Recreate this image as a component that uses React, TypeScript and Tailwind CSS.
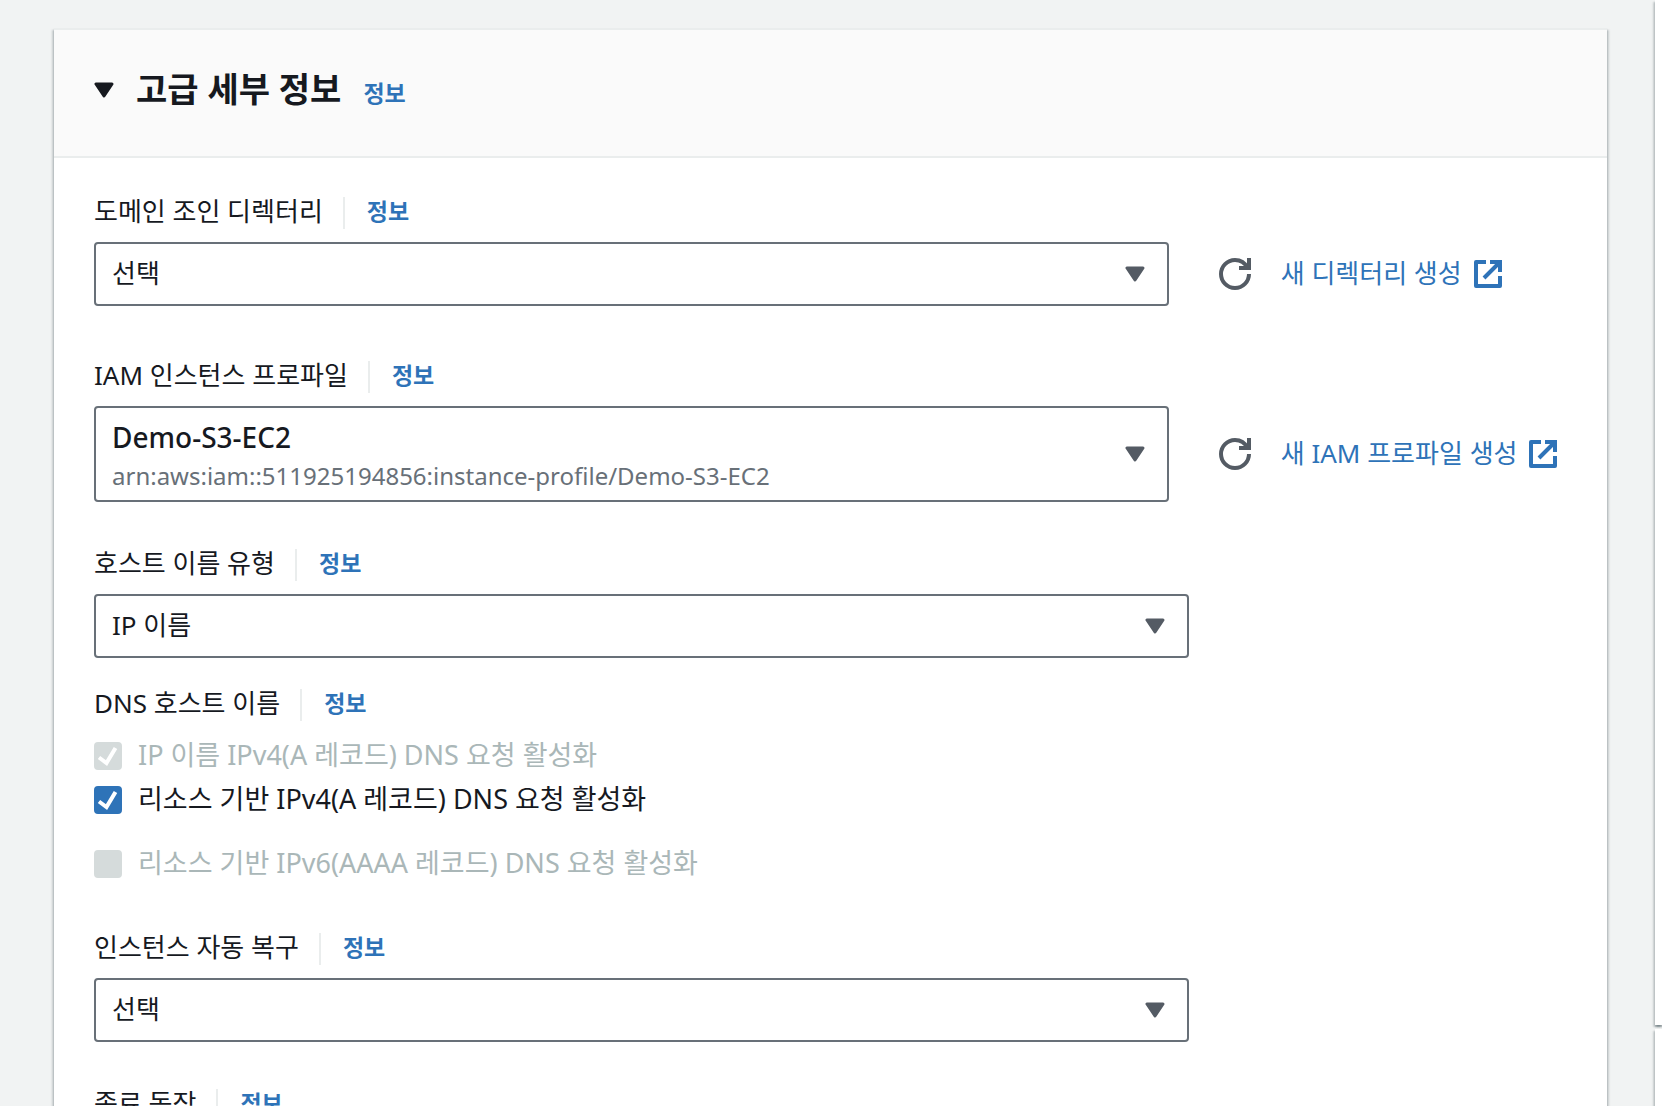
import React, { useState } from "react";

const Caret = ({ className = "" }: { className?: string }) => (
  <svg viewBox="0 0 20 16" className={`w-5 h-4 ${className}`} aria-hidden="true">
    <path
      d="M2 2h16l-8 12z"
      fill="currentColor"
      stroke="currentColor"
      strokeWidth="3"
      strokeLinejoin="round"
    />
  </svg>
);

const RefreshIcon = () => (
  <svg viewBox="0 0 16 16" className="w-8 h-8" fill="none" stroke="currentColor" strokeWidth="2" aria-hidden="true">
    <path d="M15 8a7 7 0 1 1-7-7c2.8 0 5 1.4 6.3 4" />
    <path d="M15 0v5h-5" />
  </svg>
);

const ExternalIcon = () => (
  <svg viewBox="0 0 14 14" className="w-7 h-7" fill="none" stroke="currentColor" strokeWidth="2" aria-hidden="true">
    <path d="M6 1H1v12h12V8" strokeLinejoin="round" />
    <path d="M8 1h5v5M13 1L5 9" />
  </svg>
);

const InfoLink = () => (
  <a href="#info" className="text-[23px] leading-7 font-bold text-[#2e73b8]">
    정보
  </a>
);

const FieldLabel = ({ id, text }: { id: string; text: string }) => (
  <div className="flex items-start h-8 mb-[13px]">
    <label htmlFor={id} className="text-[26px] leading-7">
      {text}
    </label>
    <span className="w-0.5 h-8 ml-5 mr-[22px] bg-[#eaeded]" />
    <InfoLink />
  </div>
);

type SelectProps = {
  id: string;
  value: string;
  description?: string;
};

const SelectBox = ({ id, value, description }: SelectProps) => (
  <div className="relative">
    <select
      id={id}
      className={`block w-full appearance-none rounded-sm border-2 border-[#687078] bg-white pl-4 pr-16 ${
        description ? "h-24 pb-[34px] text-[28px] font-medium" : "h-16 pb-0.5 text-[26px]"
      }`}
    >
      <option>{value}</option>
    </select>
    {description && (
      <span className="absolute left-[18px] bottom-2.5 text-2xl text-[#687078] pointer-events-none">
        {description}
      </span>
    )}
    <Caret className="absolute right-6 inset-y-0 my-auto text-[#545b64] pointer-events-none" />
  </div>
);

const CreateActions = ({ label }: { label: string }) => (
  <div className="flex items-center ml-[50px] whitespace-nowrap">
    <button type="button" aria-label="refresh" className="text-[#545b64]">
      <RefreshIcon />
    </button>
    <a href="#create" className="flex items-center gap-3 ml-[30px] text-[26px] leading-8 text-[#2e73b8]">
      <span className="pb-0.5">{label}</span>
      <ExternalIcon />
    </a>
  </div>
);

type CheckProps = {
  id: string;
  text: string;
  initial?: boolean;
  disabled?: boolean;
};

const CheckRow = ({ id, text, initial = false, disabled = false }: CheckProps) => {
  const [checked, setChecked] = useState(initial);

  return (
    <div className="flex items-center h-11">
      <span className="relative w-7 h-7 mr-4">
        <input
          id={id}
          type="checkbox"
          checked={checked}
          disabled={disabled}
          onChange={(e) => setChecked(e.target.checked)}
          className="block w-7 h-7 appearance-none rounded-sm border-2 border-[#687078] checked:border-[#2e73b8] checked:bg-[#2e73b8] disabled:border-[#d5dbdb] disabled:bg-[#d5dbdb]"
        />
        {checked && (
          <svg
            viewBox="0 0 28 28"
            className="absolute inset-0 w-7 h-7 text-white pointer-events-none"
            fill="none"
            stroke="currentColor"
            strokeWidth="4"
            aria-hidden="true"
          >
            <path d="M5 15.5l7.5 5.5L21.5 6" />
          </svg>
        )}
      </span>
      <label htmlFor={id} className={`pb-0.5 text-[27px] leading-8 ${disabled ? "text-[#aab7b8]" : ""}`}>
        {text}
      </label>
    </div>
  );
};

const panelShadow =
  "shadow-[0_2px_2px_rgba(0,28,36,0.3),2px_2px_2px_rgba(0,28,36,0.15),-2px_2px_2px_rgba(0,28,36,0.15)]";

const App = () => {
  return (
    <div className="flex h-screen overflow-hidden bg-[#f1f3f3] text-[#16191f] font-['Noto_Sans','Noto_Sans_CJK_KR',sans-serif]">
      <section className={`flex-1 ml-[54px] mr-12 mt-7 min-h-screen border-t-2 border-[#eaeded] bg-white ${panelShadow}`}>
        <header className="flex items-center pl-10 pt-[38px] pb-11 bg-[#fafafa] border-b-2 border-[#eaeded]">
          <button type="button" aria-label="toggle" className="mr-[22px]">
            <Caret />
          </button>
          <h2 className="pb-0.5 text-[34px] leading-[42px] font-bold mr-[22px]">고급 세부 정보</h2>
          <span className="mt-1.5">
            <InfoLink />
          </span>
        </header>

        <form className="px-10 pt-[39px]">
          <div className="mb-[55px]">
            <FieldLabel id="directory" text="도메인 조인 디렉터리" />
            <div className="flex">
              <div className="w-[calc(75%-30px)]">
                <SelectBox id="directory" value="선택" />
              </div>
              <CreateActions label="새 디렉터리 생성" />
            </div>
          </div>

          <div className="mb-[47px]">
            <FieldLabel id="profile" text="IAM 인스턴스 프로파일" />
            <div className="flex">
              <div className="w-[calc(75%-30px)]">
                <SelectBox
                  id="profile"
                  value="Demo-S3-EC2"
                  description="arn:aws:iam::511925194856:instance-profile/Demo-S3-EC2"
                />
              </div>
              <CreateActions label="새 IAM 프로파일 생성" />
            </div>
          </div>

          <div className="mb-[31px] w-[calc(75%-10px)]">
            <FieldLabel id="hostname" text="호스트 이름 유형" />
            <SelectBox id="hostname" value="IP 이름" />
          </div>

          <div className="mb-[47px]">
            <FieldLabel id="dns-ip" text="DNS 호스트 이름" />
            <CheckRow id="dns-ip" text="IP 이름 IPv4(A 레코드) DNS 요청 활성화" initial disabled />
            <CheckRow id="dns-v4" text="리소스 기반 IPv4(A 레코드) DNS 요청 활성화" initial />
            <div className="mt-5">
              <CheckRow id="dns-v6" text="리소스 기반 IPv6(AAAA 레코드) DNS 요청 활성화" disabled />
            </div>
          </div>

          <div className="mb-[47px] w-[calc(75%-10px)]">
            <FieldLabel id="recovery" text="인스턴스 자동 복구" />
            <SelectBox id="recovery" value="선택" />
          </div>

          <div className="w-[calc(75%-10px)]">
            <FieldLabel id="shutdown" text="종료 동작" />
            <SelectBox id="shutdown" value="선택" />
          </div>
        </form>
      </section>

      {/* edge of the summary column */}
      <aside className="flex flex-col gap-1 w-[7px] shrink-0">
        <div className={`h-[1025px] shrink-0 bg-white ${panelShadow}`} />
        <div className={`flex-1 bg-white ${panelShadow}`} />
      </aside>
    </div>
  );
};

export default App;
